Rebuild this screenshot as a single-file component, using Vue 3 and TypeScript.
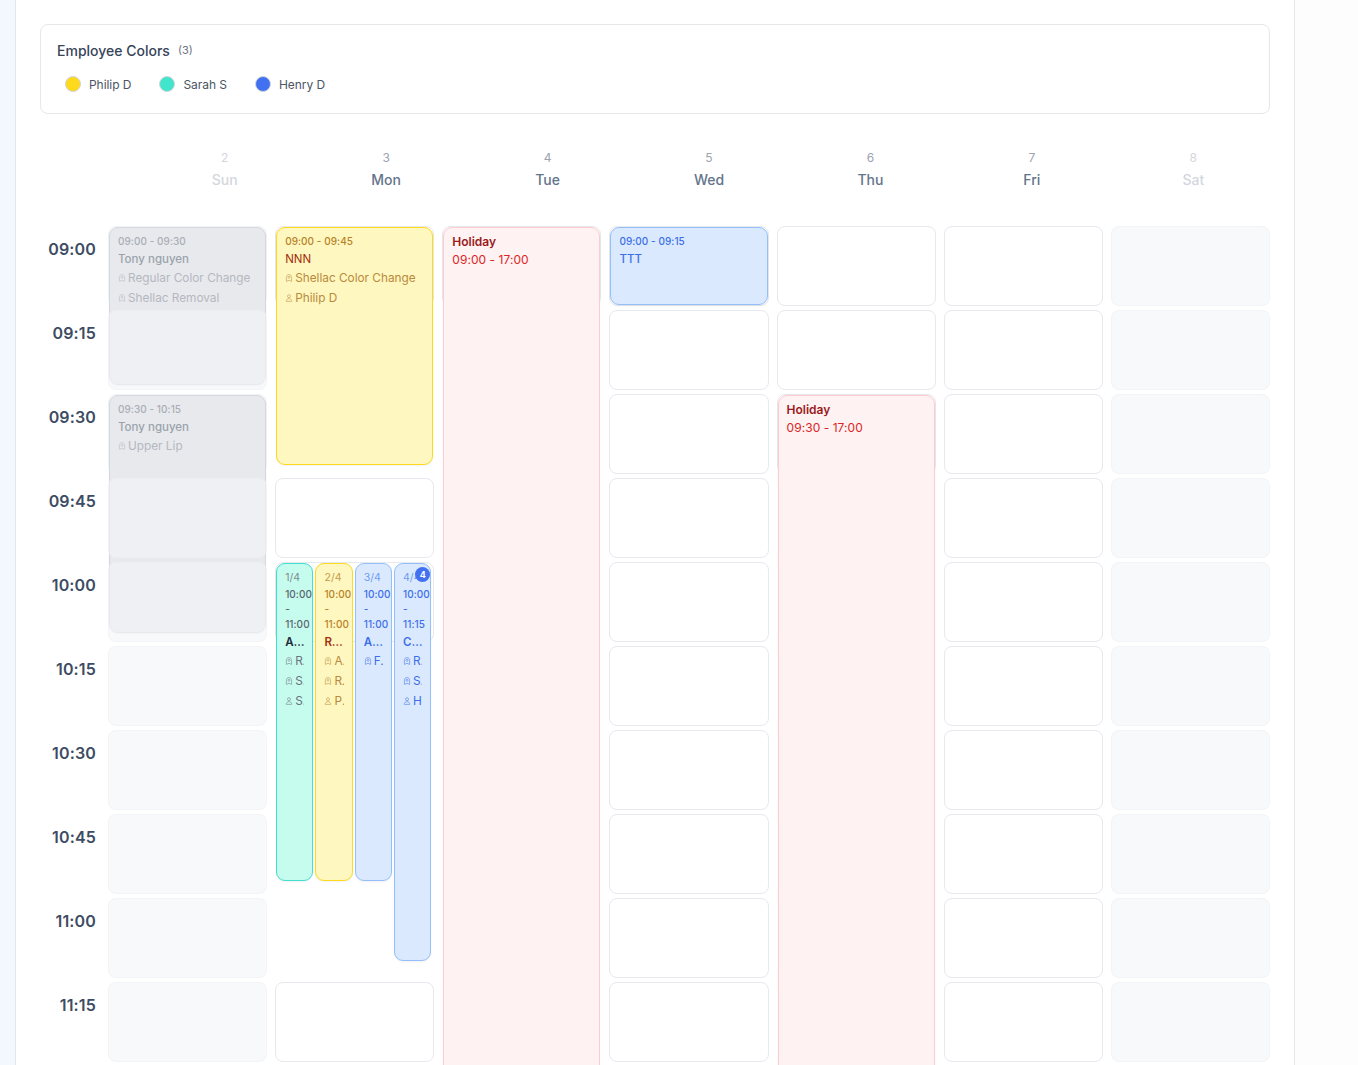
<template>
  <div class="page">
    <div class="side-strip"></div>
    <main class="card">
      <section class="legend-panel">
        <div class="legend-head">
          <span class="legend-title">Employee Colors</span>
          <span class="legend-count">({{ employees.length }})</span>
        </div>
        <div class="legend-list">
          <div v-for="emp in employees" :key="emp.name" class="legend-item">
            <span class="legend-dot" :style="{ background: emp.color }"></span>
            <span class="legend-name">{{ emp.name }}</span>
          </div>
        </div>
      </section>

      <div class="week-head">
        <div></div>
        <div
          v-for="(day, col) in days"
          :key="day.name"
          class="day-head"
          :class="{ closed: offColumns.includes(col) }"
        >
          <div class="day-num">{{ day.num }}</div>
          <div class="day-name">{{ day.name }}</div>
        </div>
      </div>

      <div class="week-grid">
        <template v-for="(time, row) in times" :key="time">
          <div class="time-label">{{ time }}</div>
          <div
            v-for="(_, col) in days"
            :key="col"
            class="slot"
            :class="slotClass(col, row)"
          >
            <div
              v-if="eventsAt(col, row).length"
              class="event-layer"
              :class="{ split: eventsAt(col, row).length > 1 }"
            >
              <article
                v-for="ev in eventsAt(col, row)"
                :key="ev.id"
                class="event"
                :class="ev.tone"
                :style="{ height: ev.slots * 80 - 2 + 'px' }"
              >
                <span v-if="ev.badge" class="badge">{{ ev.badge }}</span>
                <div v-if="ev.part" class="ev-time part">{{ ev.part }}</div>
                <template v-if="ev.tone === 'holiday'">
                  <div class="ev-name">{{ ev.name }}</div>
                  <div class="ev-time">{{ ev.range }}</div>
                </template>
                <template v-else>
                  <div class="ev-time">{{ ev.range }}</div>
                  <div class="ev-name">{{ ev.name }}</div>
                  <div class="ev-lines">
                    <div v-for="line in ev.lines" :key="line.text" class="ev-line">
                      <svg v-if="line.person" class="ev-icon" viewBox="0 0 8 8" fill="none">
                        <circle cx="4" cy="2.2" r="1.5" />
                        <path d="M1.2 7.4c0-1.8 1.2-2.7 2.8-2.7s2.8.9 2.8 2.7z" />
                      </svg>
                      <svg v-else class="ev-icon" viewBox="0 0 8 8" fill="none">
                        <path d="M1.4 3.4C1.4 1.6 2.5.6 4 .6s2.6 1 2.6 2.8v4L4 6.3 1.4 7.4z" />
                        <circle cx="4" cy="3.3" r="1" />
                      </svg>
                      <span class="ev-line-text">{{ line.text }}</span>
                    </div>
                  </div>
                </template>
              </article>
            </div>
          </div>
        </template>
      </div>
    </main>
  </div>
</template>

<script setup lang="ts">
interface EventLine {
  text: string;
  person?: boolean;
}

interface CalEvent {
  id: string;
  col: number;
  row: number;
  slots: number;
  tone: "grey" | "yellow" | "teal" | "blue" | "holiday";
  range: string;
  name: string;
  part?: string;
  badge?: number;
  lines?: EventLine[];
}

const employees = [
  { name: "Philip D", color: "#ffd91c" },
  { name: "Sarah S", color: "#41e5cb" },
  { name: "Henry D", color: "#4171f0" },
];

const days = [
  { num: 2, name: "Sun" },
  { num: 3, name: "Mon" },
  { num: 4, name: "Tue" },
  { num: 5, name: "Wed" },
  { num: 6, name: "Thu" },
  { num: 7, name: "Fri" },
  { num: 8, name: "Sat" },
];

const times = [
  "09:00",
  "09:15",
  "09:30",
  "09:45",
  "10:00",
  "10:15",
  "10:30",
  "10:45",
  "11:00",
  "11:15",
];

const offColumns = [0, 6];

// cells swallowed by a long event, "col-row"
const covered = new Set<string>([
  "1-1", "1-2", "1-5", "1-6", "1-7", "1-8",
  "2-1", "2-2", "2-3", "2-4", "2-5", "2-6", "2-7", "2-8", "2-9",
  "4-3", "4-4", "4-5", "4-6", "4-7", "4-8", "4-9",
]);

const events: CalEvent[] = [
  {
    id: "tony-1", col: 0, row: 0, slots: 2, tone: "grey", range: "09:00 - 09:30", name: "Tony nguyen",
    lines: [{ text: "Regular Color Change" }, { text: "Shellac Removal" }],
  },
  {
    id: "tony-2", col: 0, row: 2, slots: 3, tone: "grey", range: "09:30 - 10:15", name: "Tony nguyen",
    lines: [{ text: "Upper Lip" }],
  },
  {
    id: "nnn", col: 1, row: 0, slots: 3, tone: "yellow", range: "09:00 - 09:45", name: "NNN",
    lines: [{ text: "Shellac Color Change" }, { text: "Philip D", person: true }],
  },
  {
    id: "p1", col: 1, row: 4, slots: 4, tone: "teal", part: "1/4", range: "10:00 - 11:00", name: "Anna",
    lines: [{ text: "Regular" }, { text: "Shellac" }, { text: "Sarah S", person: true }],
  },
  {
    id: "p2", col: 1, row: 4, slots: 4, tone: "yellow", part: "2/4", range: "10:00 - 11:00", name: "Rose",
    lines: [{ text: "Acrylic" }, { text: "Regular" }, { text: "Philip D", person: true }],
  },
  {
    id: "p3", col: 1, row: 4, slots: 4, tone: "blue", part: "3/4", range: "10:00 - 11:00", name: "Amy",
    lines: [{ text: "French" }],
  },
  {
    id: "p4", col: 1, row: 4, slots: 5, tone: "blue", part: "4/4", badge: 4, range: "10:00 - 11:15", name: "Cathy",
    lines: [{ text: "Regular" }, { text: "Shellac" }, { text: "Henry D", person: true }],
  },
  { id: "hol-tue", col: 2, row: 0, slots: 12, tone: "holiday", range: "09:00 - 17:00", name: "Holiday" },
  { id: "ttt", col: 3, row: 0, slots: 1, tone: "blue", range: "09:00 - 09:15", name: "TTT", lines: [] },
  { id: "hol-thu", col: 4, row: 2, slots: 12, tone: "holiday", range: "09:30 - 17:00", name: "Holiday" },
];

const eventsAt = (col: number, row: number): CalEvent[] =>
  events.filter((ev) => ev.col === col && ev.row === row);

const slotClass = (col: number, row: number) => ({
  off: offColumns.includes(col),
  covered: covered.has(`${col}-${row}`),
});
</script>

<style scoped>
.page {
  display: flex;
  height: 1065px;
  overflow: hidden;
  background: #fdfdfe;
  font-family: Inter, "Liberation Sans", sans-serif;
  color: #374151;
}
.side-strip {
  width: 15px;
  flex: none;
  background: #f3f7fe;
}
.card {
  width: 1280px;
  flex: none;
  box-sizing: border-box;
  padding: 24px 24px 0;
  background: #fff;
  border-left: 1px solid #e5e7eb;
  border-right: 1px solid #e5e7eb;
}
.legend-panel {
  box-sizing: border-box;
  height: 90px;
  padding: 16px 16px 0;
  border: 1px solid #e5e7eb;
  border-radius: 8px;
}
.legend-head {
  display: flex;
  align-items: center;
  gap: 8px;
  height: 18px;
}
.legend-title {
  font-size: 14px;
  font-weight: 500;
  color: #374458;
}
.legend-count {
  font-size: 11px;
  color: #6b7280;
}
.legend-list {
  display: flex;
  gap: 28px;
  margin-top: 17px;
  padding-left: 8px;
}
.legend-item {
  display: flex;
  align-items: center;
  gap: 8px;
  height: 16px;
}
.legend-dot {
  box-sizing: border-box;
  width: 16px;
  height: 16px;
  border: 1px solid #d1d5db;
  border-radius: 50%;
}
.legend-name {
  font-size: 12px;
  letter-spacing: -0.05px;
  color: #4b5563;
}
.week-head {
  display: grid;
  grid-template-columns: 100px repeat(7, minmax(0, 1fr));
  gap: 8px;
  margin-top: 36px;
  margin-bottom: 36px;
  text-align: center;
}
.day-num {
  font-size: 12px;
  line-height: 16px;
  color: #9ca3af;
}
.day-name {
  margin-top: 4px;
  font-size: 14px;
  line-height: 20px;
  font-weight: 500;
  color: #64748b;
}
.closed .day-num,
.closed .day-name {
  color: #d3d6dd;
}
.week-grid {
  display: grid;
  grid-template-columns: 60px repeat(7, minmax(0, 1fr));
  grid-auto-rows: 80px;
  column-gap: 8px;
  row-gap: 4px;
}
.time-label {
  padding: 11px 4px 0 0;
  text-align: right;
  font-size: 16px;
  line-height: 24px;
  font-weight: 600;
  letter-spacing: 0.15px;
  color: #3d4c63;
}
.slot {
  position: relative;
  box-sizing: border-box;
  border: 1px solid #e8e9ee;
  border-radius: 8px;
  background: #fff;
}
.slot.off {
  border-color: rgba(229, 231, 235, 0.3);
  background-color: rgba(243, 245, 249, 0.6);
  background-image: radial-gradient(rgba(156, 163, 175, 0.07) 0.6px, transparent 0.7px);
  background-size: 4px 4px;
}
.slot.covered {
  visibility: hidden;
}
.event-layer {
  position: absolute;
  top: 0;
  left: 0;
  right: 0;
  display: flex;
  align-items: flex-start;
  gap: 2px;
  visibility: visible;
}
.event-layer.split {
  right: 2px;
}
.event {
  position: relative;
  flex: 1 1 0;
  min-width: 0;
  box-sizing: border-box;
  display: flex;
  flex-direction: column;
  gap: 2px;
  padding: 6px 8px;
  border: 1px solid;
  border-radius: 9px;
  overflow: hidden;
  box-shadow: 0 1px 2px rgba(0, 0, 0, 0.06);
}
.ev-time {
  font-size: 10px;
  line-height: 15px;
  font-weight: 500;
  letter-spacing: 0.05px;
}
.ev-time.part {
  font-size: 10.5px;
  font-weight: 400;
}
.ev-name {
  overflow: hidden;
  font-size: 11.5px;
  line-height: 16px;
  font-weight: 500;
  white-space: nowrap;
  text-overflow: ellipsis;
}
.ev-lines {
  margin-top: -1px;
}
.ev-line {
  display: flex;
  align-items: center;
  gap: 2px;
  height: 20px;
  font-size: 11.8px;
}
.ev-icon {
  flex: none;
  width: 8px;
  height: 8px;
  stroke: currentColor;
  stroke-width: 0.7;
  opacity: 0.75;
}
.ev-line-text {
  min-width: 0;
  overflow: hidden;
  white-space: nowrap;
  text-overflow: ellipsis;
}
.split .ev-name {
  font-weight: 600;
}
.badge {
  position: absolute;
  top: 3px;
  right: 0;
  display: flex;
  align-items: center;
  justify-content: center;
  width: 15px;
  height: 15px;
  border-radius: 50%;
  background: #4171f0;
  color: #fff;
  font-size: 9px;
  font-weight: 700;
}
.grey {
  background: #e8e9ed;
  border-color: #d5d8de;
}
.grey .ev-time {
  color: #a9aeb6;
}
.grey .ev-name {
  color: #9aa3ac;
}
.grey .ev-line {
  color: #b4b8c0;
}
.yellow {
  background: #fef7bf;
  border-color: #ffd91c;
}
.yellow .ev-time {
  color: #b7822a;
}
.yellow .ev-name {
  color: #a1300f;
  font-weight: 400;
}
.split .yellow .ev-name {
  font-weight: 600;
}
.yellow .ev-line {
  color: #b98a3c;
}
.yellow .part {
  color: #c59a4c;
}
.teal {
  background: #c6fcee;
  border-color: #40e0d0;
}
.teal .ev-time {
  color: #5b6570;
}
.teal .ev-name {
  color: #1f2937;
}
.teal .ev-line {
  color: #6b7280;
}
.teal .part {
  color: #7d8c90;
}
.blue {
  background: #dbe9fe;
  border-color: #93c0fa;
}
.blue .ev-time,
.blue .ev-name,
.blue .ev-line {
  color: #3b6fe8;
}
.blue .part {
  color: #6d9cf0;
}
.holiday {
  background: #fef2f2;
  border-color: #fccdd0;
  gap: 3px;
}
.holiday .ev-name {
  font-size: 12px;
  line-height: 15px;
  font-weight: 600;
  color: #991b1b;
}
.holiday .ev-time {
  font-size: 12px;
  font-weight: 400;
  color: #dc2626;
}
</style>
